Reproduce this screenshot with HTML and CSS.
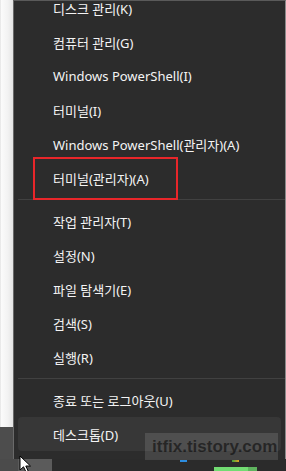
FILE: index.html
```html
<!DOCTYPE html>
<html lang="ko">
<head>
<meta charset="utf-8">
<link rel="stylesheet" href="styles.css">
</head>
<body>
<div class="screen">
  <div class="main">
    <div class="desk">
      <div class="win"></div>
      <div class="desk-dark"></div>
    </div>
    <div class="menu">
      <div class="menu-inner">
        <ul class="list">
          <li class="item">디스크 관리(K)</li>
          <li class="item">컴퓨터 관리(G)</li>
          <li class="item">Windows PowerShell(I)</li>
          <li class="item">터미널(I)</li>
          <li class="item">Windows PowerShell(관리자)(A)</li>
          <li class="item">터미널(관리자)(A)</li>
          <li class="sep"></li>
          <li class="item">작업 관리자(T)</li>
          <li class="item">설정(N)</li>
          <li class="item">파일 탐색기(E)</li>
          <li class="item">검색(S)</li>
          <li class="item">실행(R)</li>
          <li class="sep"></li>
          <li class="item">종료 또는 로그아웃(U)</li>
          <li class="item hover">데스크톱(D)</li>
        </ul>
      </div>
    </div>
  </div>
  <div class="taskbar">
    <div class="tb-left"></div>
    <div class="tb-btn"></div>
    <div class="tb-rest">
      <span class="dash blue"></span>
      <span class="dash multi"></span>
      <span class="green"></span>
    </div>
  </div>
  <div class="highlight"></div>
  <div class="watermark">itfix.tistory.com</div>
  <svg class="cursor" width="13" height="18" viewBox="0 0 13 18">
    <path d="M1 1 L1 15 L4.5 11.8 L7 17 L9.2 16 L6.8 11 L11.5 11 Z" fill="#fff" stroke="#000" stroke-width="1"/>
  </svg>
</div>
</body>
</html>
```

FILE: styles.css
```css
html, body {
  margin: 0;
  padding: 0;
}
body {
  width: 286px;
  height: 471px;
  overflow: hidden;
  background: #2a2a2a;
  font-family: "Noto Sans", "Noto Sans CJK KR", sans-serif;
}
.screen {
  position: relative;
  width: 286px;
  height: 471px;
  display: flex;
  flex-direction: column;
}
.main {
  display: flex;
  height: 459px;
}
.desk {
  width: 13px;
  display: flex;
  flex-direction: column;
}
.win {
  flex: 1;
  background: linear-gradient(to right, #d8d8d8 0, #fbfbfb 1px, #f2f2f2 8px, #e4e4e4 13px);
}
.desk-dark {
  height: 32px;
  background: #4d4d4d;
}
.menu {
  flex: 1;
  background: #2c2c2c;
  border-left: 1px solid #6a6a6a;
  border-top: 1px solid #5a5a5a;
  border-right: 1px solid #8a8a8a;
  display: flex;
  flex-direction: column;
}
.menu-inner {
  flex: 1;
  overflow: hidden;
}
.list {
  list-style: none;
  margin: -10px 0 0 0;
  padding: 0 0 0 4px;
}
.item {
  height: 34px;
  display: flex;
  align-items: center;
  padding-left: 35px;
  font-size: 13px;
  color: #f4f4f4;
  border-radius: 4px;
  margin-right: 4px;
  white-space: nowrap;
}
.item.hover {
  background: #373737;
}
.sep {
  height: 1px;
  background: #414141;
  margin: 4px 0;
}
.taskbar {
  height: 12px;
  display: flex;
  background: #2b2b2b;
}
.tb-left {
  width: 18px;
  background: #4b4b4b;
}
.tb-btn {
  width: 34px;
  background: #5b5b5b;
}
.tb-rest {
  flex: 1;
  position: relative;
}
.dash {
  position: absolute;
  top: 1px;
  height: 2px;
  width: 7px;
}
.dash.blue {
  left: 128px;
  background: #2d8de0;
}
.dash.multi {
  left: 180px;
  background: linear-gradient(to right, #3ca03c, #e0a020);
}
.green {
  position: absolute;
  left: 162px;
  top: 8px;
  width: 43px;
  height: 4px;
  background: linear-gradient(to right, #72dc72 0, #72dc72 34px, #5fb45f 34px);
}
.highlight {
  position: absolute;
  left: 33px;
  top: 157px;
  width: 141px;
  height: 39px;
  border: 2px solid #e8262a;
}
.watermark {
  position: absolute;
  left: 145px;
  top: 433px;
  width: 133px;
  height: 27px;
  background: rgba(255, 255, 255, 0.12);
  color: rgba(10, 10, 10, 0.6);
  font-family: "Liberation Sans", sans-serif;
  font-weight: bold;
  font-size: 17px;
  line-height: 27px;
  padding-left: 7px;
  box-sizing: border-box;
  white-space: nowrap;
}
.cursor {
  position: absolute;
  left: 19px;
  top: 455px;
}
```
